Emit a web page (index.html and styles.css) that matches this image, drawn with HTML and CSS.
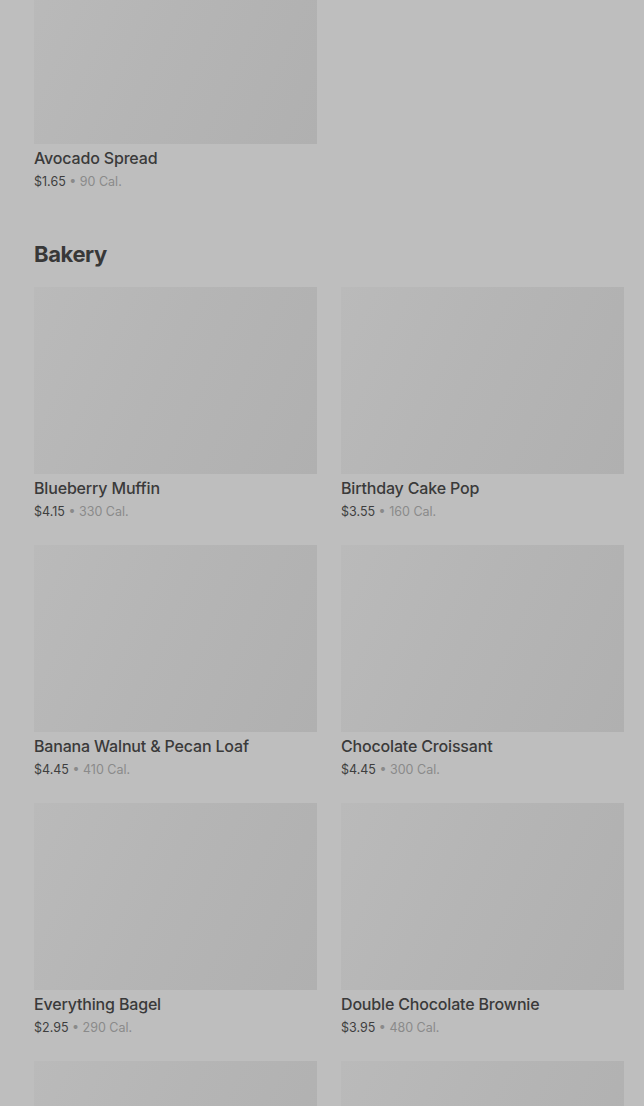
FILE: index.html
```html
<!DOCTYPE html>
<html lang="en">
<head>
    <meta charset="UTF-8">
    <meta name="viewport" content="width=device-width, initial-scale=1.0">
    <title>Menu</title>
    <link rel="stylesheet" href="styles.css">
</head>
<body>
    <div class="menu">
        <div class="section">
            <div class="grid">
                <div class="item">
                    <div class="thumb"></div>
                    <div class="name">Avocado Spread</div>
                    <div class="meta"><span class="price">$1.65</span> • 90 Cal.</div>
                </div>
            </div>
        </div>

        <div class="section">
            <h2 class="section-title">Bakery</h2>
            <div class="grid">
                <div class="item">
                    <div class="thumb"></div>
                    <div class="name">Blueberry Muffin</div>
                    <div class="meta"><span class="price">$4.15</span> • 330 Cal.</div>
                </div>
                <div class="item">
                    <div class="thumb"></div>
                    <div class="name">Birthday Cake Pop</div>
                    <div class="meta"><span class="price">$3.55</span> • 160 Cal.</div>
                </div>
                <div class="item">
                    <div class="thumb"></div>
                    <div class="name">Banana Walnut &amp; Pecan Loaf</div>
                    <div class="meta"><span class="price">$4.45</span> • 410 Cal.</div>
                </div>
                <div class="item">
                    <div class="thumb"></div>
                    <div class="name">Chocolate Croissant</div>
                    <div class="meta"><span class="price">$4.45</span> • 300 Cal.</div>
                </div>
                <div class="item">
                    <div class="thumb"></div>
                    <div class="name">Everything Bagel</div>
                    <div class="meta"><span class="price">$2.95</span> • 290 Cal.</div>
                </div>
                <div class="item">
                    <div class="thumb"></div>
                    <div class="name">Double Chocolate Brownie</div>
                    <div class="meta"><span class="price">$3.95</span> • 480 Cal.</div>
                </div>
                <div class="item">
                    <div class="thumb"></div>
                </div>
                <div class="item">
                    <div class="thumb"></div>
                </div>
            </div>
        </div>
    </div>
</body>
</html>
```

FILE: styles.css
```css
html, body {
    margin: 0;
    padding: 0;
    background-color: #bebebe;
    overflow: hidden;
}
body {
    font-family: Inter, "Noto Sans", Arial, sans-serif;
    color: #3a3a3a;
}
.menu {
    padding: 0 20px 0 34px;
    margin-top: -43px;
}
.section {
    margin-bottom: 46px;
}
.section-title {
    font-size: 22px;
    line-height: 28px;
    font-weight: 700;
    letter-spacing: -0.4px;
    margin: 0 0 19px 0;
    color: #383838;
}
.grid {
    display: grid;
    grid-template-columns: 283px 283px;
    column-gap: 24px;
    row-gap: 21px;
}
.thumb {
    height: 187px;
    background: linear-gradient(115deg, #bababa 0%, #b5b5b5 45%, #b0b0b0 100%);
}
.name {
    margin-top: 3px;
    font-size: 16px;
    line-height: 22px;
    font-weight: 500;
    letter-spacing: -0.17px;
    color: #3a3a3a;
    white-space: nowrap;
}
.meta {
    font-size: 12.5px;
    line-height: 25px;
    color: #8a8a8a;
}
.price {
    color: #3e3e3e;
}
```
